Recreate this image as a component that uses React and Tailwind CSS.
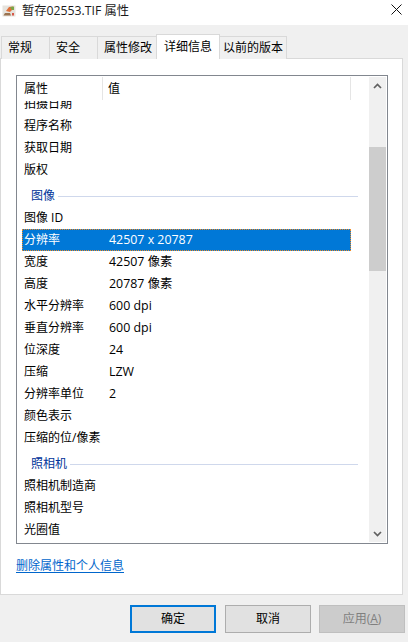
import React from "react";

function Row({ k, v, selected }) {
  if (selected) {
    return (
      <div className="h-[22px] ml-[5px] w-[329px] flex items-center bg-[#0078d7] text-white border border-dotted border-[#f08a24]">
        <span className="w-[86px] pl-[1px] shrink-0">{k}</span>
        <span className="text-[12.4px]">{v}</span>
      </div>
    );
  }
  return (
    <div className="h-[22px] pl-[7px] flex items-center text-black">
      <span className="w-[85px] shrink-0">{k}</span>
      {v && <span className="text-[12.4px]">{v}</span>}
    </div>
  );
}

function Group({ label }) {
  return (
    <div className="h-[22px] mt-[4px] pl-[14px] pr-px flex items-center">
      <span className="text-[#003399]">{label}</span>
      <div className="flex-1 h-px bg-[#cfd8ec] ml-[3px]" />
    </div>
  );
}

function Tab({ w, pl, children }) {
  return (
    <div className={`${w} ${pl} h-[23px] mt-[2px] -mr-px bg-[#f0f0f0] border border-b-0 border-[#d9d9d9] flex items-center text-black`}>
      {children}
    </div>
  );
}

function Btn({ children, cls }) {
  return (
    <div className={`w-[86px] h-[28px] flex items-center justify-center ${cls}`}>{children}</div>
  );
}

export default function App() {
  return (
    <div className="w-[408px] h-[642px] bg-[#f0f0f0] flex flex-col overflow-hidden text-[12px] leading-none font-['Open_Sans','Noto_Sans_CJK_SC',sans-serif]">
      <div className="h-[25px] bg-white flex items-center shrink-0 relative">
        <svg className="ml-[2px] mt-[-3px]" width="14" height="14" viewBox="0 0 14 14">
          <rect x="0.5" y="1.5" width="13" height="11" fill="#e6e3dd" />
          <path d="M4 7 L7 3 L11 2.5 L11 5 L8 8 Z" fill="#e0703a" />
          <path d="M8 3 L12 2.5 L12 6 L10 6 Z" fill="#7ba648" />
          <path d="M1.5 11.5 L3 9 L8 9 L9 11.5 Z" fill="#9a7350" />
          <rect x="10" y="9" width="2" height="2.5" fill="#d8584a" />
        </svg>
        <span className="ml-[6px] text-[12.25px] text-[#1a1a1a] mt-[-3px]">暂存02553.TIF 属性</span>
        <svg className="absolute right-[6px] top-[4px]" width="11" height="11" viewBox="0 0 11 11">
          <path d="M0.5 0.5 L10.5 10.5 M10.5 0.5 L0.5 10.5" stroke="#111" strokeWidth="1" />
        </svg>
      </div>

      <div className="h-[10px] shrink-0" />

      <div className="flex items-end pl-[1px] h-[24px] shrink-0 relative z-10 -mb-px">
        <Tab w="w-[49px]" pl="pl-[6px]">常规</Tab>
        <Tab w="w-[49px]" pl="pl-[6px]">安全</Tab>
        <Tab w="w-[60px]" pl="pl-[6px]">属性修改</Tab>
        <div className="w-[64px] h-[25px] -mr-px pl-[7px] bg-white border border-b-0 border-[#d9d9d9] flex items-center text-black relative z-10">
          详细信息
        </div>
        <Tab w="w-[68px]" pl="pl-[3px]">以前的版本</Tab>
      </div>

      <div className="w-[403px] h-[537px] bg-white border border-[#d9d9d9] shrink-0 pt-[16px] pl-[15px]">
        <div className="w-[372px] h-[469px] border border-[#82878f] flex overflow-hidden">
          <div className="flex-1 flex flex-col min-w-0 overflow-hidden">
            <div className="h-[25px] flex shrink-0 bg-white relative z-10">
              <div className="w-[86px] pl-[7px] pt-[1px] flex items-center border-r border-[#e5e5e5] my-[1px] text-black">属性</div>
              <div className="w-[248px] pl-[5px] pt-[1px] flex items-center border-r border-[#e5e5e5] my-[1px] text-black">值</div>
            </div>
            <div className="flex-1 overflow-hidden pr-[10px]">
              <div className="-mt-[8px]">
                <Row k="拍摄日期" />
                <Row k="程序名称" />
                <Row k="获取日期" />
                <Row k="版权" />
                <Group label="图像" />
                <Row k="图像 ID" />
                <Row k="分辨率" v="42507 x 20787" selected />
                <Row k="宽度" v="42507 像素" />
                <Row k="高度" v="20787 像素" />
                <Row k="水平分辨率" v="600 dpi" />
                <Row k="垂直分辨率" v="600 dpi" />
                <Row k="位深度" v="24" />
                <Row k="压缩" v="LZW" />
                <Row k="分辨率单位" v="2" />
                <Row k="颜色表示" />
                <Row k="压缩的位/像素" />
                <Group label="照相机" />
                <Row k="照相机制造商" />
                <Row k="照相机型号" />
                <Row k="光圈值" />
              </div>
            </div>
          </div>
          <div className="w-[17px] mr-px my-[1px] bg-[#f0f0f0] flex flex-col shrink-0">
            <div className="h-[17px] flex items-center justify-center shrink-0">
              <svg width="9" height="6" viewBox="0 0 9 6"><path d="M1 5 L4.5 1.5 L8 5" fill="none" stroke="#606060" strokeWidth="1.7" /></svg>
            </div>
            <div className="h-[53px] shrink-0" />
            <div className="h-[124px] bg-[#cdcdcd] shrink-0" />
            <div className="flex-1" />
            <div className="h-[17px] flex items-center justify-center shrink-0">
              <svg width="9" height="6" viewBox="0 0 9 6"><path d="M1 1 L4.5 4.5 L8 1" fill="none" stroke="#606060" strokeWidth="1.7" /></svg>
            </div>
          </div>
        </div>
        <div className="mt-[16px] text-[#0066cc] underline underline-offset-2">删除属性和个人信息</div>
      </div>

      <div className="flex justify-end pr-[3px] mt-[10px] shrink-0">
        <Btn cls="bg-[#e1e1e1] border-2 border-[#0078d7] text-black">确定</Btn>
        <Btn cls="ml-[9px] bg-[#e1e1e1] border border-[#adadad] text-black">取消</Btn>
        <Btn cls="ml-[8px] bg-[#cccccc] border border-[#bfbfbf] text-[#7f7f7f]"><span>应用(<span className="underline">A</span>)</span></Btn>
      </div>
    </div>
  );
}
